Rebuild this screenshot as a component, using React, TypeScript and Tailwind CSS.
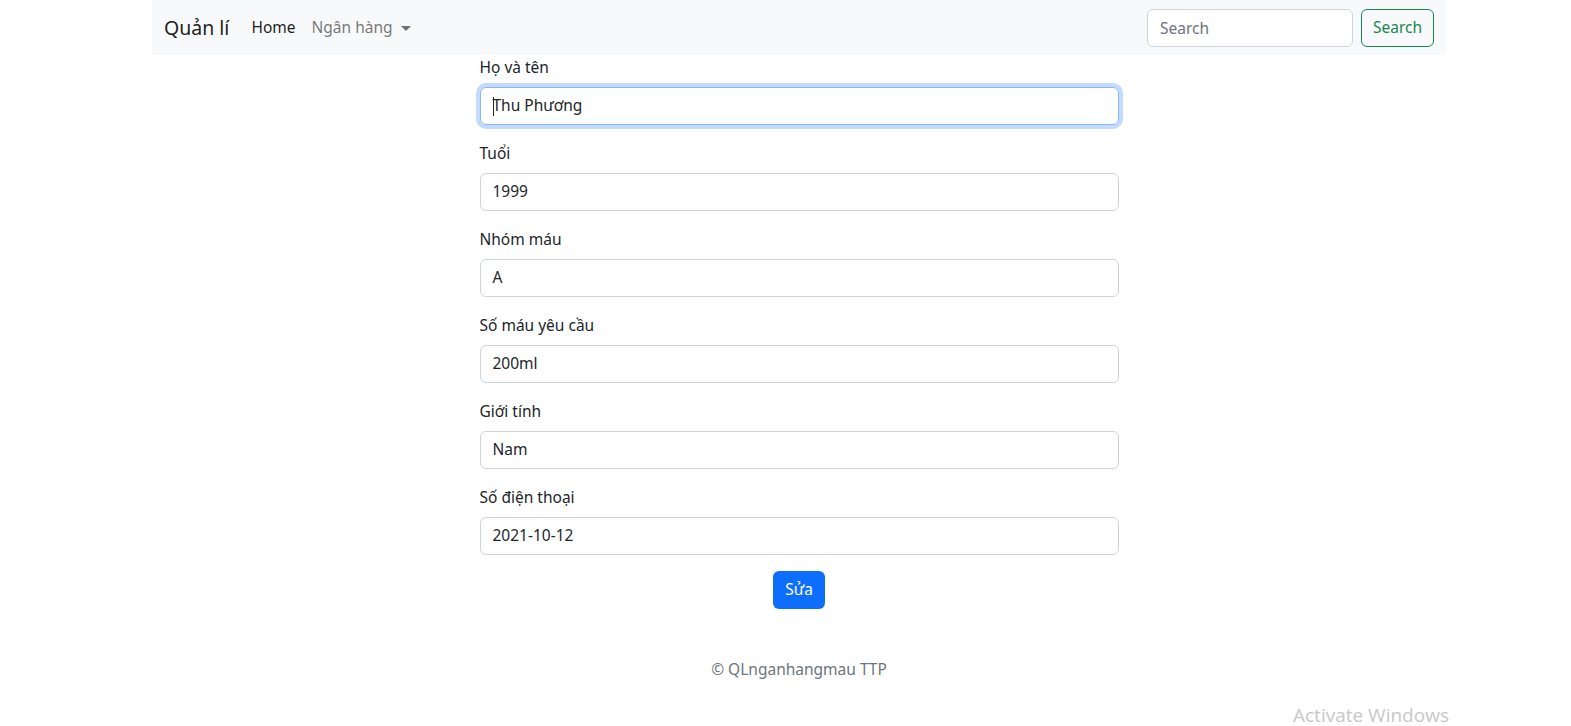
import React from 'react'

const fields = [
  { label: 'Họ và tên', value: 'Thu Phương', focused: true },
  { label: 'Tuổi', value: '1999' },
  { label: 'Nhóm máu', value: 'A' },
  { label: 'Số máu yêu cầu', value: '200ml' },
  { label: 'Giới tính', value: 'Nam' },
  { label: 'Số điện thoại', value: '2021-10-12' },
]

export default function App() {
  return (
    <div className="relative min-h-[726px] bg-white text-[15.5px] text-[#212529] font-['Noto_Sans',sans-serif]">
      <div className="ml-[152px] w-[1294px] flex flex-col items-center">
        <nav className="w-full h-[55px] bg-[#f8f9fa] flex items-center px-3">
          <span className="text-[19.5px] text-black/90 mr-[22px]">Quản lí</span>
          <span className="pr-2 text-black/90">Home</span>
          <span className="px-2 text-black/55 flex items-center gap-2">
            Ngân hàng
            <span className="w-0 h-0 border-x-[5px] border-x-transparent border-t-[5px] border-t-black/55 mt-[1px]"></span>
          </span>
          <div className="ml-auto flex items-center gap-2">
            <input
              className="w-[206px] h-[38px] px-3 border border-[#ced4da] rounded-[6px] bg-white outline-none placeholder:text-[#6c757d]"
              placeholder="Search"
            />
            <button className="h-[38px] w-[73px] border border-[#198754] text-[#198754] rounded-[6px]">Search</button>
          </div>
        </nav>

        <form className="w-[639px] flex flex-col">
          {fields.map((f) => (
            <div key={f.label} className="mb-4 flex flex-col">
              <label className="leading-6 mb-2">{f.label}</label>
              <div
                className={
                  f.focused
                    ? 'h-[38px] px-3 rounded-[6px] border border-[#86b7fe] shadow-[0_0_0_4px_rgba(13,110,253,0.25)] flex items-center'
                    : 'h-[38px] px-3 rounded-[6px] border border-[#ced4da] flex items-center'
                }
              >
                {f.focused && <span className="w-px h-[19px] bg-[#212529] -mr-px"></span>}
                <span>{f.value}</span>
              </div>
            </div>
          ))}
          <div className="flex justify-center">
            <button type="button" className="h-[38px] w-[52px] bg-[#0d6efd] text-white rounded-[6px]">Sửa</button>
          </div>
        </form>

        <footer className="mt-12 leading-6 text-[#6c757d]">© QLnganhangmau TTP</footer>
      </div>

      <div className="absolute left-[1293px] top-[701px] text-[19px] text-[#c8c8c8] font-['Open_Sans',sans-serif]">Activate Windows</div>
    </div>
  )
}
